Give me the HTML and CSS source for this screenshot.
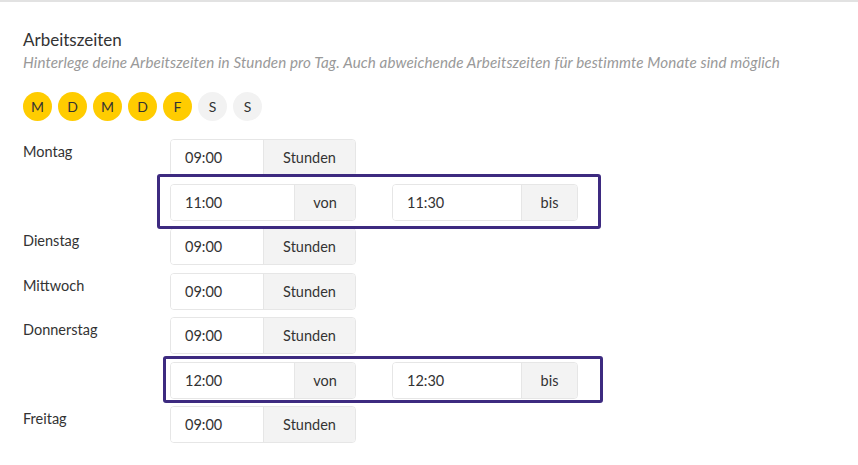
FILE: index.html
```html
<!DOCTYPE html>
<html lang="de">
<head>
<meta charset="utf-8">
<title>Arbeitszeiten</title>
<link rel="stylesheet" href="styles.css">
</head>
<body>
<div class="page">
  <h2 class="title">Arbeitszeiten</h2>
  <p class="subtitle">Hinterlege deine Arbeitszeiten in Stunden pro Tag. Auch abweichende Arbeitszeiten für bestimmte Monate sind möglich</p>
  <div class="days">
    <span class="day on">M</span>
    <span class="day on">D</span>
    <span class="day on">M</span>
    <span class="day on">D</span>
    <span class="day on">F</span>
    <span class="day">S</span>
    <span class="day">S</span>
  </div>
  <div class="grid">
    <div class="label">Montag</div>
    <div class="cells"><div class="group"><span class="val">09:00</span><span class="addon">Stunden</span></div></div>

    <div class="label"></div>
    <div class="cells">
      <div class="group range"><span class="val">11:00</span><span class="addon">von</span></div>
      <div class="group range2"><span class="val">11:30</span><span class="addon">bis</span></div>
    </div>

    <div class="label">Dienstag</div>
    <div class="cells"><div class="group"><span class="val">09:00</span><span class="addon">Stunden</span></div></div>

    <div class="label">Mittwoch</div>
    <div class="cells"><div class="group"><span class="val">09:00</span><span class="addon">Stunden</span></div></div>

    <div class="label">Donnerstag</div>
    <div class="cells"><div class="group"><span class="val">09:00</span><span class="addon">Stunden</span></div></div>

    <div class="label"></div>
    <div class="cells">
      <div class="group range"><span class="val">12:00</span><span class="addon">von</span></div>
      <div class="group range2"><span class="val">12:30</span><span class="addon">bis</span></div>
    </div>

    <div class="label">Freitag</div>
    <div class="cells"><div class="group"><span class="val">09:00</span><span class="addon">Stunden</span></div></div>
  </div>
  <div class="mark mark1"></div>
  <div class="mark mark2"></div>
</div>
</body>
</html>
```
FILE: styles.css
```css
* { box-sizing: border-box; }
html, body { margin: 0; padding: 0; background: #fff; }
body {
  font-family: Lato, "Open Sans", sans-serif;
  color: #333;
  overflow: hidden;
}
.page {
  position: relative;
  border-top: 2px solid #e2e2e2;
  padding: 27px 23px 0 23px;
  height: 465px;
}
.title {
  margin: 0;
  font-size: 17px;
  font-weight: 400;
  line-height: 22px;
  color: #333;
}
.subtitle {
  margin: 1px 0 0 0;
  font-size: 15.2px;
  letter-spacing: 0.1px;
  line-height: 20px;
  font-style: italic;
  color: #999;
  white-space: nowrap;
}
.days {
  display: flex;
  gap: 6px;
  margin-top: 19.5px;
}
.day {
  width: 29px;
  height: 29px;
  border-radius: 50%;
  background: #f2f2f2;
  display: flex;
  align-items: center;
  justify-content: center;
  font-size: 14px;
  color: #333;
}
.day.on { background: #ffcc00; }
.grid {
  display: grid;
  grid-template-columns: 147px auto;
  grid-auto-rows: 37px;
  row-gap: 7.5px;
  margin-top: 18.5px;
}
.label {
  font-size: 14.5px;
  line-height: 20px;
  padding-top: 3px;
  color: #333;
}
.cells {
  display: flex;
  gap: 36px;
}
.group {
  display: flex;
  width: 186px;
  height: 37px;
  border: 1px solid #e6e6e6;
  border-radius: 4px;
  overflow: hidden;
  font-size: 14.5px;
}
.val {
  width: 93px;
  display: flex;
  align-items: center;
  padding-left: 14px;
  background: #fff;
  border-right: 1px solid #e6e6e6;
}
.addon {
  flex: 1;
  display: flex;
  align-items: center;
  justify-content: center;
  background: #f3f3f3;
}
.range .val { width: 124px; }
.range2 .val { width: 129px; }
.mark {
  position: absolute;
  border: 3px solid #3d2a80;
  border-radius: 3px;
}
.mark1 { left: 157px; top: 172px; width: 444px; height: 55px; }
.mark2 { left: 163px; top: 354px; width: 440px; height: 47px; }
```
